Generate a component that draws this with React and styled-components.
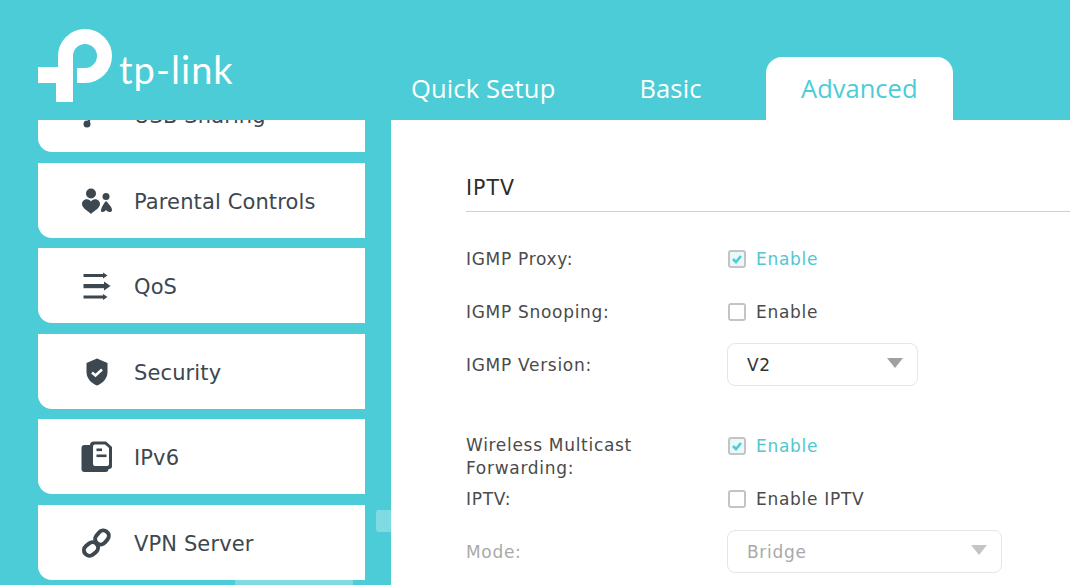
import React from 'react';
import styled, { createGlobalStyle } from 'styled-components';

const TEAL = '#4bccd7';
const INK = '#3c474f';

const GlobalStyle = createGlobalStyle`
    html, body {
        margin: 0;
        padding: 0;
        background: ${TEAL};
        overflow: hidden;
    }
    * {
        box-sizing: border-box;
    }
`;

const Page = styled.div`
    width: 1070px;
    height: 585px;
    display: flex;
    flex-direction: column;
    overflow: hidden;
    background: ${TEAL};
    font-family: 'DejaVu Sans', Verdana, sans-serif;
`;

const Header = styled.header`
    height: 120px;
    flex: none;
    display: flex;
    align-items: flex-end;
    justify-content: space-between;
`;

const LogoWrap = styled.div`
    align-self: flex-start;
    display: flex;
    align-items: flex-start;
    padding: 28px 0 0 38px;
`;

const LogoMark = styled.svg`
    width: 76px;
    height: 76px;
    flex: none;
`;

const LogoText = styled.span`
    margin: 18px 0 0 5px;
    font-family: 'Lato', sans-serif;
    font-size: 38px;
    font-weight: 400;
    line-height: 46px;
    letter-spacing: 1px;
    color: #fff;
`;

const Tabs = styled.nav`
    display: flex;
    align-items: flex-end;
    padding-right: 117px;
`;

const Tab = styled.div`
    height: 63px;
    display: flex;
    align-items: center;
    padding: 0 ${p => (p.$active ? 35.5 : 42)}px 2px;
    margin-left: ${p => (p.$active ? 22 : 0)}px;
    border-radius: 16px 16px 0 0;
    background: ${p => (p.$active ? '#fff' : 'transparent')};
    color: ${p => (p.$active ? TEAL : '#fff')};
    font-family: 'Open Sans', sans-serif;
    font-size: 25.5px;
    letter-spacing: ${p => (p.$active ? 0 : 0.15)}px;
`;

const Body = styled.div`
    flex: 1;
    display: flex;
    min-height: 0;
    position: relative;
`;

const Sidebar = styled.aside`
    width: 391px;
    flex: none;
    display: flex;
    flex-direction: column;
    justify-content: flex-end;
    gap: 10.5px;
    padding: 0 26px 5.2px 38px;
    overflow: hidden;
`;

const MenuItem = styled.div`
    height: 75px;
    flex: none;
    display: flex;
    align-items: center;
    gap: 21px;
    padding: 1px 0 0 43px;
    background: #fff;
    border-radius: 0 0 0 14px;
    color: ${INK};
    font-size: 21px;
    letter-spacing: 0.12px;
`;

const MenuLabel = styled.span`
    padding-top: 2px;
`;

const MenuIcon = styled.svg`
    width: 32px;
    height: 32px;
    flex: none;
`;

const ScrollThumb = styled.div`
    position: absolute;
    left: 376px;
    top: 390px;
    width: 15px;
    height: 22px;
    background: #7fdae2;
    border-radius: 3px 0 0 3px;
`;

const BottomGlow = styled.div`
    position: absolute;
    left: 235px;
    bottom: 0;
    width: 118px;
    height: 5px;
    background: #7fdae2;
`;

const Main = styled.main`
    flex: 1;
    background: #fff;
    padding: 52px 0 0 75px;
    color: #4a4a4a;
    font-size: 17px;
    letter-spacing: 0.7px;
`;

const SectionTitle = styled.h2`
    margin: 0;
    height: 40px;
    line-height: 33px;
    font-size: 20.5px;
    font-weight: 400;
    letter-spacing: 1px;
    color: #2c2c2c;
    border-bottom: 1px solid #cfcfcf;
`;

const Form = styled.div`
    padding-top: 20.5px;
`;

const Row = styled.div`
    display: grid;
    grid-template-columns: 261px 1fr;
    align-items: ${p => (p.$top ? 'start' : 'center')};
    height: ${p => p.$h}px;
    margin-top: ${p => p.$gap || 0}px;
    color: ${p => (p.$disabled ? '#a9a9a9' : 'inherit')};
`;

const Label = styled.div`
    line-height: 23px;
`;

const CheckField = styled.div`
    display: flex;
    align-items: center;
    gap: 10px;
    margin: ${p => p.$drop || 0}px 0 0 1px;
    color: ${p => (p.$on ? '#52c6cf' : 'inherit')};
`;

const CheckBox = styled.span`
    width: 18px;
    height: 18px;
    flex: none;
    display: flex;
    align-items: center;
    justify-content: center;
    border: 2px solid #c4c4c4;
    border-radius: 3px;
    background: ${p => (p.$on ? '#e9f8fa' : '#fff')};
`;

const CheckMark = styled.svg`
    width: 12px;
    height: 12px;
`;

const Select = styled.div`
    width: ${p => p.$w}px;
    height: 43px;
    margin-top: -2px;
    display: flex;
    align-items: center;
    justify-content: space-between;
    padding: 2px 14px 0 19px;
    border: 1px solid #e6e6e6;
    border-radius: 8px;
    color: ${p => (p.$disabled ? '#a9a9a9' : '#333')};
`;

const Caret = styled.span`
    width: 0;
    height: 0;
    margin-top: -4px;
    border-left: 8px solid transparent;
    border-right: 8px solid transparent;
    border-top: 10px solid ${p => (p.$disabled ? '#c4c4c4' : '#a0a0a0')};
`;

const UsbIcon = () => (
    <MenuIcon viewBox="0 0 32 32">
        <circle cx="6" cy="25" r="3.5" fill={INK} />
        <path d="M7 24 L14 8 M10 16 H20" stroke={INK} strokeWidth="2" fill="none" />
    </MenuIcon>
);

const ParentalIcon = () => (
    <MenuIcon viewBox="0 0 32 32" fill={INK}>
        <circle cx="10" cy="8.5" r="5" />
        <path d="M1 19 C1 14 7.5 12.5 10 16.5 C12.5 12.5 19 14 19 19 C19 23 13 26 10 29 C7 26 1 23 1 19 Z" />
        <circle cx="25" cy="11.5" r="3.5" />
        <path d="M25 16 C27 18 31 22 31 25 C31 27.5 27.5 27.5 26 26 L25 25 L24 26 C22.5 27.5 19.5 27.5 20 25 C20.5 22 23 18 25 16 Z" />
    </MenuIcon>
);

const QosIcon = () => (
    <MenuIcon viewBox="0 0 32 32" fill={INK}>
        <rect x="2.5" y="4" width="21" height="3" />
        <path d="M22 2.5 L26.5 5.5 L22 8.5 Z" />
        <rect x="2.5" y="14" width="22" height="4.2" />
        <path d="M23 11.5 L29.5 16 L23 20.5 Z" />
        <rect x="2.5" y="25.5" width="21" height="3" />
        <path d="M22 24 L26.5 27 L22 30 Z" />
    </MenuIcon>
);

const ShieldIcon = () => (
    <MenuIcon viewBox="0 0 32 32">
        <path
            d="M16 2.5 L26.5 7 V16 C26.5 23 21 27.5 16 29.5 C11 27.5 5.5 23 5.5 16 V7 Z"
            fill={INK}
        />
        <path d="M11 16.5 L14.5 19.5 L21 13.5" stroke="#fff" strokeWidth="2.6" fill="none" />
    </MenuIcon>
);

const Ipv6Icon = () => (
    <MenuIcon viewBox="0 0 32 32">
        <rect x="0.5" y="4" width="27" height="27" rx="3" fill={INK} />
        <path d="M13 0.5 H25 L31 6 V25 Q31 28 28 28 H13 Q9 28 9 25 V4 Q9 0.5 13 0.5 Z" fill={INK} />
        <path d="M14 3.5 H24 L28 7 V23 Q28 25 26 25 H14 Q12 25 12 23 V5.5 Q12 3.5 14 3.5 Z" fill="#fff" />
        <rect x="15.5" y="7.5" width="5.5" height="2.6" fill={INK} />
        <rect x="15.5" y="13.5" width="10" height="2.6" fill={INK} />
    </MenuIcon>
);

const LinkIcon = () => (
    <MenuIcon viewBox="0 0 32 32" fill="none" stroke={INK} strokeWidth="4">
        <rect x="-7.5" y="-5.5" width="15" height="11" rx="5.5" transform="translate(10 22) rotate(-40)" />
        <rect x="-7.5" y="-5.5" width="15" height="11" rx="5.5" transform="translate(21 10.5) rotate(-50)" />
    </MenuIcon>
);

const menu = [
    { name: 'USB Sharing', Icon: UsbIcon },
    { name: 'Parental Controls', Icon: ParentalIcon },
    { name: 'QoS', Icon: QosIcon },
    { name: 'Security', Icon: ShieldIcon },
    { name: 'IPv6', Icon: Ipv6Icon },
    { name: 'VPN Server', Icon: LinkIcon },
];

const Check = ({ on, drop, children }) => (
    <CheckField $on={on} $drop={drop}>
        <CheckBox $on={on}>
            {on && (
                <CheckMark viewBox="0 0 12 12">
                    <path d="M2 6 L5 9 L10 3" stroke={TEAL} strokeWidth="2.6" fill="none" />
                </CheckMark>
            )}
        </CheckBox>
        {children}
    </CheckField>
);

export default function App() {
    return (
        <Page>
            <GlobalStyle />
            <Header>
                <LogoWrap>
                    <LogoMark viewBox="38 28 76 76">
                        <path d="M38 67 H73 V102 H56 V83 H38 Z" fill="#fff" />
                        <path
                            d="M65.5 68 V56 A19.5 19.5 0 1 1 85 75.5 H77"
                            fill="none"
                            stroke="#fff"
                            strokeWidth="15"
                        />
                    </LogoMark>
                    <LogoText>tp-link</LogoText>
                </LogoWrap>
                <Tabs>
                    <Tab>Quick Setup</Tab>
                    <Tab>Basic</Tab>
                    <Tab $active>Advanced</Tab>
                </Tabs>
            </Header>
            <Body>
                <Sidebar>
                    {menu.map(({ name, Icon }) => (
                        <MenuItem key={name}>
                            <Icon />
                            <MenuLabel>{name}</MenuLabel>
                        </MenuItem>
                    ))}
                </Sidebar>
                <ScrollThumb />
                <BottomGlow />
                <Main>
                    <SectionTitle>IPTV</SectionTitle>
                    <Form>
                        <Row $h={53}>
                            <Label>IGMP Proxy:</Label>
                            <Check on>Enable</Check>
                        </Row>
                        <Row $h={53}>
                            <Label>IGMP Snooping:</Label>
                            <Check>Enable</Check>
                        </Row>
                        <Row $h={53}>
                            <Label>IGMP Version:</Label>
                            <Select $w={191}>
                                V2
                                <Caret />
                            </Select>
                        </Row>
                        <Row $h={50.5} $top $gap={42}>
                            <Label>
                                Wireless Multicast
                                <br />
                                Forwarding:
                            </Label>
                            <Check on drop={2}>Enable</Check>
                        </Row>
                        <Row $h={30}>
                            <Label>IPTV:</Label>
                            <Check>Enable IPTV</Check>
                        </Row>
                        <Row $h={76} $disabled>
                            <Label>Mode:</Label>
                            <Select $w={275} $disabled>
                                Bridge
                                <Caret $disabled />
                            </Select>
                        </Row>
                    </Form>
                </Main>
            </Body>
        </Page>
    );
}
